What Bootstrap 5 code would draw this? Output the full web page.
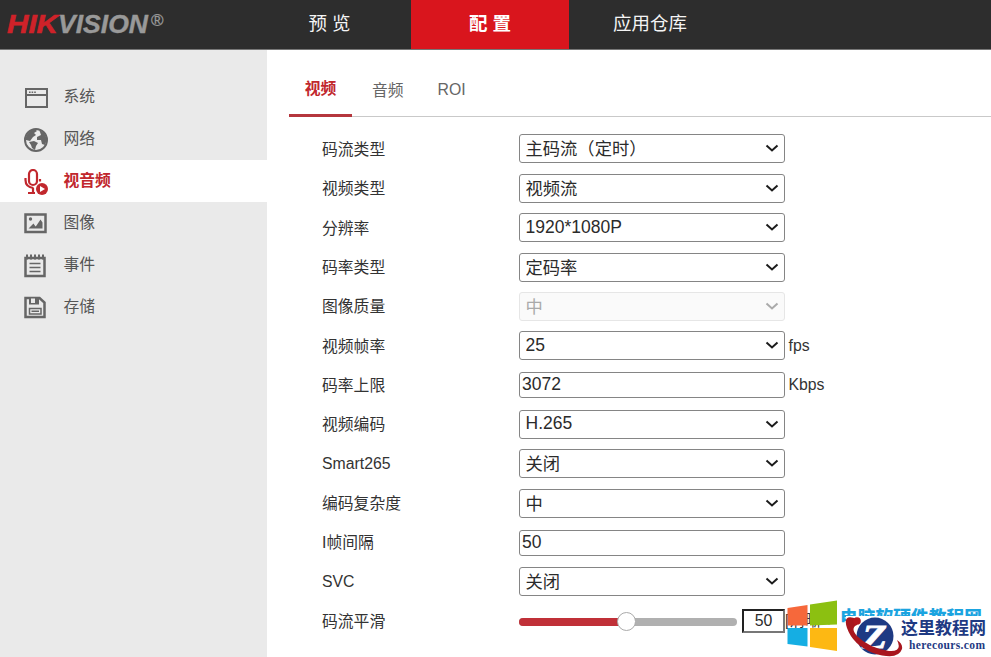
<!DOCTYPE html>
<html lang="zh-CN">
<head>
<meta charset="utf-8">
<title>HIKVISION</title>
<link href="https://cdn.jsdelivr.net/npm/bootstrap@5.3.0/dist/css/bootstrap.min.css" rel="stylesheet">
<style>
body{font-family:"Liberation Sans","Noto Sans CJK SC",sans-serif;font-size:15.8px;line-height:24px;color:#333;background:#fff;height:657px;overflow:hidden}
.topbar{height:49.5px;background:#2d2d2d;border-bottom:1px solid #777}
.brand-box{width:248px}
.topbar .nav-link{height:49px;line-height:48px;color:#f4f4f4;font-size:18.5px;padding:0;text-align:center}
.t1{width:163px}.t2{width:158px}.t3{width:162px}
.topbar .nav-link.active{background:#d9151d;font-weight:700;color:#fff}
.page-body{height:608px}
.side{width:267px;background:#eaeaea;padding-top:26px;flex:none}
.side .nav-link{height:42px;padding:0 0 0 23px;color:#555;display:flex;align-items:center}
.side .nav-link span{margin-left:14.500px}
.side .nav-link svg{width:26px;height:26px;margin-top:2px}
.side .nav-link.active{background:#fff;color:#c1272d;font-weight:700}
.tabs{margin-left:22px;height:67px;border-bottom:1px solid #c9c9c9}
.tabs .nav-link{color:#666;padding:28px 0 0;height:67px;text-align:center}
.tabs .cn{padding-top:29px}
.tabs .nav-link.active{color:#c1272d;font-weight:700;width:63px;padding-top:27px;border-bottom:3px solid #b5363d}
.settings{padding:12.8px 0 0 55px}
.line{height:39.36px;display:flex;align-items:center}
.line label{width:197px;flex:none}
.line label.cn{padding-top:2px}
.line .form-select,.line .form-control{width:265.500px;font-size:17.5px;color:#2b2b2b;border:1px solid #858585;border-radius:3px;line-height:24px}
.line .form-select{height:29px;padding:0 24px 2px 5.500px;background-image:none}
.line .form-select.cn{padding-top:1px;padding-bottom:0;font-size:17.300px}
.line .form-control{height:26px;padding:0 0 1px 2px}
.line .form-select:disabled{background:#fafafa;border-color:#e6e6e6;color:#aaa;opacity:1}
.pick{position:relative}
.pick svg{position:absolute;right:5.500px;top:8px;width:14px;height:12px;fill:none;stroke:#1c1c1c;stroke-width:2}
.pick .form-select:disabled+svg{stroke:#aaa}
.unit{margin-left:4px}
.slide{width:218px;height:8px;border-radius:4px;background:#b0b0b0;position:relative;margin-top:2px}
.slide-fill{height:8px;border-radius:4px;background:#c03038;width:49%}
.knob{position:absolute;width:19px;height:19px;border-radius:50%;background:#fff;border:1px solid #aaa;left:98px;top:-6px}
.line .amount{width:43px;height:24px;margin-left:5px;border:2px solid #777;border-top-color:#222;border-left-color:#222;border-radius:0;font-size:15.8px;text-align:center;padding:0}
.stamp{position:absolute;left:780px;top:592px;width:211px;height:65px}
</style>
<script src="https://cdn.jsdelivr.net/npm/bootstrap@5.3.0/dist/js/bootstrap.bundle.min.js"></script>
</head>
<body>
<header class="topbar d-flex">
  <div class="brand-box"><svg width="200" height="49" font-family="Liberation Sans" font-weight="700" font-style="italic" font-size="25.500"><text x="7" y="32.500" textLength="51" lengthAdjust="spacingAndGlyphs" fill="#cf2229" stroke="#cf2229" stroke-width=".6">HIK</text><text x="58" y="32.500" textLength="90" lengthAdjust="spacingAndGlyphs" fill="#999" stroke="#999" stroke-width=".4">VISION</text><text x="151" y="26" font-size="17" font-weight="400" font-style="normal" fill="#999" stroke="#999" stroke-width=".3">®</text></svg></div>
  <nav class="nav"><a class="nav-link t1">预 览</a><a class="nav-link active t2">配 置</a><a class="nav-link t3">应用仓库</a></nav>
</header>
<div class="d-flex page-body">
  <aside class="side">
    <nav class="nav flex-column">
      <a class="nav-link"><svg viewBox="0 0 26 26" fill="none" stroke="#666" stroke-width="2"><path d="M3 4h21v18H3zM4 10h20"/><path d="M6 7.300h7" stroke-width="1.400" stroke-dasharray="1.600 1"/></svg><span>系统</span></a>
      <a class="nav-link"><svg viewBox="0 0 26 26"><circle cx="13" cy="13" r="11" fill="#eaeaea" stroke="#666" stroke-width="2"/><path fill="#666" d="M3 10Q6 3 12 2l2 2-3 2 2 2-3 2-3 4-4-1zM6 15l5-1 4 2-2 3-1 4-3-2-1-3zM16 3l5 3 3 6-2 6-3-1-1-4-4 0 0-3 4-2-1-3z"/></svg><span>网络</span></a>
      <a class="nav-link active"><svg viewBox="0 0 26 26" fill="none" stroke="#c1272d" stroke-width="2.200"><rect x="6" y="1" width="8" height="15" rx="4"/><path d="M2.500 9v2q0 7 8 8M17 10v2.500M10 19v5M5 24h7"/><circle cx="19" cy="20" r="6" fill="#c1272d" stroke="none"/><path d="M17 17l5 3-5 3z" fill="#fff" stroke="none"/></svg><span>视音频</span></a>
      <a class="nav-link"><svg viewBox="0 0 26 26"><rect x="2.500" y="3.500" width="20" height="17.500" fill="none" stroke="#666" stroke-width="2.500"/><circle cx="7.500" cy="8" r="1.700" fill="#666"/><path d="M5.500 17.500l5-5 2 3 1-1 4-6 2 3v6z" fill="#666"/></svg><span>图像</span></a>
      <a class="nav-link"><svg viewBox="0 0 26 26" fill="none" stroke="#666" stroke-width="2.500"><path d="M2.500 5h19v18h-19z"/><path d="M4 1.500v5M8 1.500v5M12 1.500v5M16 1.500v5M20 1.500v5" stroke-width="2"/><path d="M6.500 10.500h11M6.500 14.500h11M6.500 18.500h11" stroke-width="1.500"/></svg><span>事件</span></a>
      <a class="nav-link"><svg viewBox="0 0 26 26"><path d="M2.500 3h14l5 4.500V22h-19z" fill="none" stroke="#666" stroke-width="2.500"/><path d="M6 3h10v6.500H6z" fill="#666"/><path d="M8 3.500h4v4.500H8z" fill="#eaeaea"/><path d="M6.500 13.500h11.500v5.500H6.500zM8.500 16.300h7.500" fill="none" stroke="#666" stroke-width="1.500"/></svg><span>存储</span></a>
    </nav>
  </aside>
  <main class="flex-grow-1">
    <nav class="nav tabs"><a class="nav-link active">视频</a><a class="nav-link cn ms-3 ps-1">音频</a><a class="nav-link" style="margin-left:34px">ROI</a></nav>
    <form class="settings">
      <div class="line"><label class="cn">码流类型</label><div class="pick"><select class="form-select cn"><option>主码流（定时）</option></select><svg viewBox="0 0 14 12"><path d="M1.500 3.500l5.500 5 5.500-5"/></svg></div></div>
      <div class="line"><label class="cn">视频类型</label><div class="pick"><select class="form-select cn"><option>视频流</option></select><svg viewBox="0 0 14 12"><path d="M1.500 3.500l5.500 5 5.500-5"/></svg></div></div>
      <div class="line"><label class="cn">分辨率</label><div class="pick"><select class="form-select"><option>1920*1080P</option></select><svg viewBox="0 0 14 12"><path d="M1.500 3.500l5.500 5 5.500-5"/></svg></div></div>
      <div class="line"><label class="cn">码率类型</label><div class="pick"><select class="form-select cn"><option>定码率</option></select><svg viewBox="0 0 14 12"><path d="M1.500 3.500l5.500 5 5.500-5"/></svg></div></div>
      <div class="line"><label class="cn">图像质量</label><div class="pick"><select class="form-select cn" disabled><option>中</option></select><svg viewBox="0 0 14 12"><path d="M1.500 3.500l5.500 5 5.500-5"/></svg></div></div>
      <div class="line"><label class="cn">视频帧率</label><div class="pick"><select class="form-select"><option>25</option></select><svg viewBox="0 0 14 12"><path d="M1.500 3.500l5.500 5 5.500-5"/></svg></div><span class="unit">fps</span></div>
      <div class="line"><label class="cn">码率上限</label><input class="form-control" value="3072"><span class="unit">Kbps</span></div>
      <div class="line"><label class="cn">视频编码</label><div class="pick"><select class="form-select"><option>H.265</option></select><svg viewBox="0 0 14 12"><path d="M1.500 3.500l5.500 5 5.500-5"/></svg></div></div>
      <div class="line"><label>Smart265</label><div class="pick"><select class="form-select cn"><option>关闭</option></select><svg viewBox="0 0 14 12"><path d="M1.500 3.500l5.500 5 5.500-5"/></svg></div></div>
      <div class="line"><label class="cn">编码复杂度</label><div class="pick"><select class="form-select cn"><option>中</option></select><svg viewBox="0 0 14 12"><path d="M1.500 3.500l5.500 5 5.500-5"/></svg></div></div>
      <div class="line"><label>I帧间隔</label><input class="form-control" value="50"></div>
      <div class="line"><label>SVC</label><div class="pick"><select class="form-select cn"><option>关闭</option></select><svg viewBox="0 0 14 12"><path d="M1.500 3.500l5.500 5 5.500-5"/></svg></div></div>
      <div class="line"><label class="cn">码流平滑</label><div class="slide"><div class="slide-fill"></div><div class="knob"></div></div><input class="form-control amount" value="50"><span>[清晰&lt;-</span></div>
    </form>
  </main>
</div>
<svg class="stamp" viewBox="780 592 211 65">
  <text x="840" y="624" font-size="17.7" font-weight="900" fill="#1ba4e0" font-family="Noto Sans CJK SC" textLength="142">电脑软硬件教程网</text>
  <path d="M846 616h145V657H846z" fill="#fff"/>
  <path d="M787.500 608l20-3v20.500h-20z" fill="#f6683b"/><path d="M810 604.500l27-4v24l-27 1z" fill="#8cc011"/><path d="M787.500 628h20v18.500l-20-2.500z" fill="#15aee3"/><path d="M810 628h27v23l-27-4z" fill="#fdb813"/>
  <circle cx="875" cy="636" r="18.500" fill="#1e3a83"/>
  <text x="862" y="647.500" font-size="33" font-weight="700" font-style="italic" fill="#fff" stroke="#fff" stroke-width=".8" font-family="Liberation Serif" textLength="25" lengthAdjust="spacingAndGlyphs">Z</text>
  <path d="M857 619Q842 613 847 628Q853 645 873 653Q898 661 902 649Q903 644 897 640Q903 652 889 651Q869 648 857 636Q850 628 857 625z" fill="#a8161e"/><circle cx="857" cy="621" r="3.800" fill="#b3161e"/>
  <text x="901" y="634" font-size="17" font-weight="700" fill="#1e3a83" font-family="Noto Sans CJK SC" textLength="85">这里教程网</text>
  <text x="909" y="648.500" font-size="11.500" font-weight="700" fill="#1e3a83" font-family="Liberation Serif" textLength="76">herecours.com</text>
</svg>
</body>
</html>
